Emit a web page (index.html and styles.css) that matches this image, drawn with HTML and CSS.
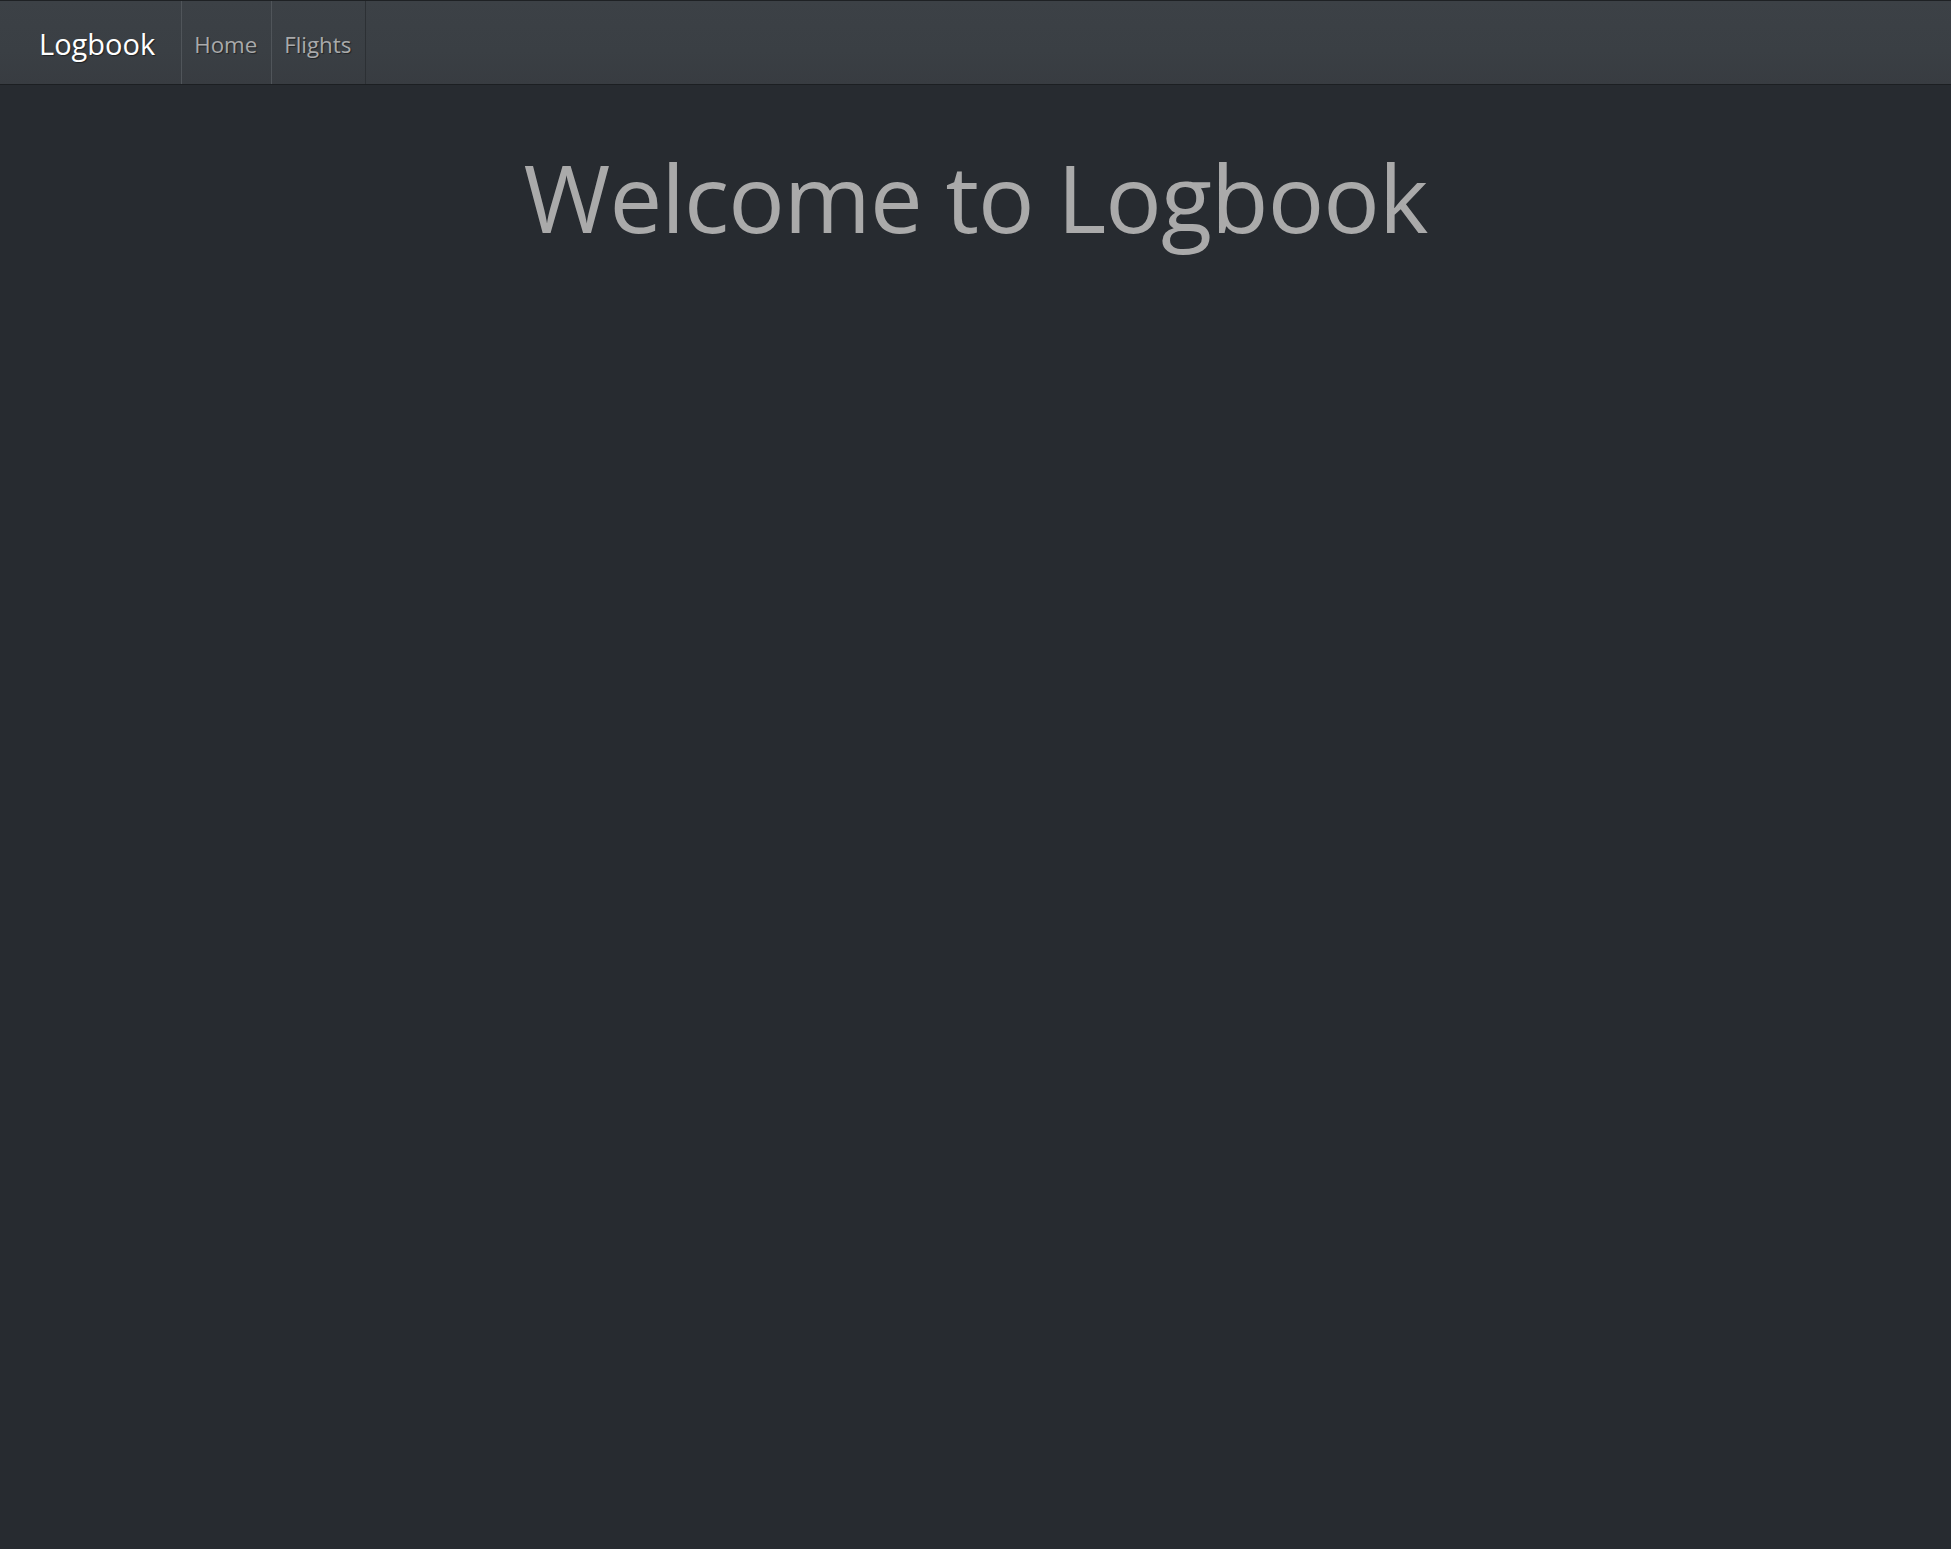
FILE: index.html
```html
<!DOCTYPE html>
<html lang="en">
<head>
<meta charset="utf-8">
<title>Logbook</title>
<link rel="stylesheet" href="styles.css">
</head>
<body>
<nav class="navbar">
  <a class="brand" href="#">Logbook</a>
  <ul class="nav">
    <li class="nav-item nav-home"><a class="nav-link" href="#">Home</a></li>
    <li class="nav-item nav-flights"><a class="nav-link" href="#">Flights</a></li>
  </ul>
</nav>
<main class="content">
  <h1 class="title">Welcome to Logbook</h1>
</main>
</body>
</html>
```
FILE: styles.css
```css
html, body {
  margin: 0;
  padding: 0;
  height: 100%;
}
body {
  background: #272b30;
  color: #aaaaaa;
  font-family: "Open Sans", "Noto Sans", sans-serif;
}
.navbar {
  display: flex;
  align-items: stretch;
  height: 83px;
  border-top: 1px solid #1e2124;
  border-bottom: 1px solid #1c1f22;
  background: linear-gradient(#3c4146, #3a3f44 60%, #383c41);
}
.brand {
  display: block;
  padding: 23px 0 20px 39px;
  margin-right: 26px;
  font-size: 29px;
  line-height: 40px;
  color: #ffffff;
  text-decoration: none;
  text-shadow: 1px 1px 1px rgba(0, 0, 0, 0.45);
}
.nav {
  display: flex;
  list-style: none;
  margin: 0;
  padding: 0;
}
.nav-item {
  display: flex;
}
.nav-home {
  border-left: 1px solid #50555a;
}
.nav-flights {
  border-left: 1px solid #50555a;
  border-right: 1px solid #2c3034;
}
.nav-link {
  display: block;
  padding: 29px 14px 24px 12px;
  font-size: 22.3px;
  line-height: 30px;
  color: #a9aaab;
  text-decoration: none;
  text-shadow: 1px 1px 1px rgba(0, 0, 0, 0.45);
}
.content {
  padding-top: 57px;
}
.title {
  margin: 0;
  text-align: center;
  font-size: 94px;
  font-weight: 400;
  letter-spacing: -0.9px;
  line-height: 110px;
  color: #aaaaaa;
}
```
